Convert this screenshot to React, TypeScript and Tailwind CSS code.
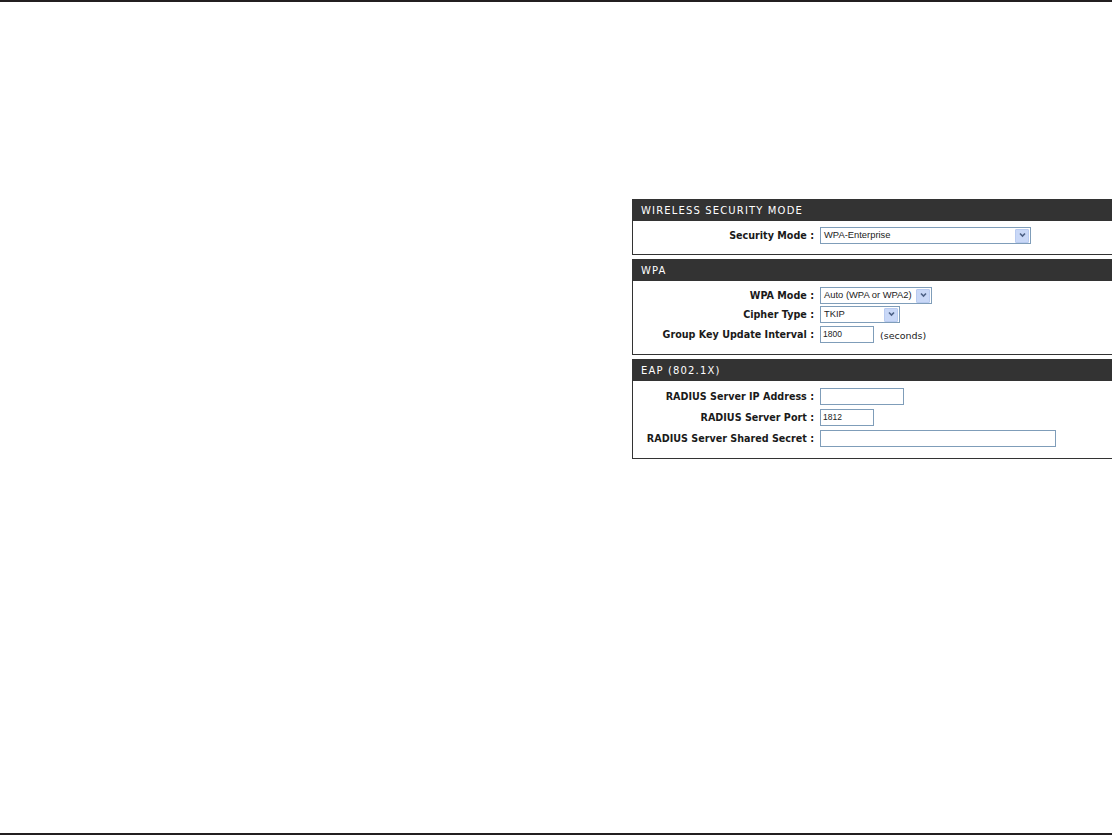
import { ReactNode } from 'react';

const labelFont = 'font-["DejaVu_Sans",sans-serif]';

function Panel({ title, height, body, children }: { title: string; height: string; body: string; children: ReactNode }) {
  return (
    <section className={`${height} border-l border-b border-[#333333] flex flex-col`}>
      <h2 className={`h-[22px] bg-[#333333] pl-[8px] flex items-center text-[10px] tracking-[1.15px] text-white font-normal ${labelFont}`}>
        {title}
      </h2>
      <div className={`flex flex-col ${body}`}>{children}</div>
    </section>
  );
}

function Row({ label, children }: { label: string; children: ReactNode }) {
  return (
    <div className="flex items-center h-[17px]">
      <label className={`w-[182px] pr-[1px] pt-[1px] leading-[14px] text-right text-[9.6px] font-bold text-[#1a1a1a] whitespace-nowrap ${labelFont}`}>
        {label}&nbsp;:
      </label>
      <div className="ml-[5px] flex items-center">{children}</div>
    </div>
  );
}

function Select({ value, width }: { value: string; width: string }) {
  return (
    <div className={`${width} h-[17px] border border-[#7f9db9] bg-white flex items-center pl-[3px] pr-[1px] justify-between`}>
      <span className='text-[9.4px] text-[#222222] font-["Liberation_Sans",sans-serif]'>{value}</span>
      <span className="w-[14px] h-[14px] bg-[#c9d8f7] border border-[#b9cbf0] rounded-[1px] flex items-center justify-center">
        <svg width="9" height="7" viewBox="0 0 9 7" fill="none">
          <path d="M2 1.5 4.5 4 7 1.5" stroke="#4d6185" strokeWidth="1.6" />
        </svg>
      </span>
    </div>
  );
}

function Input({ value, width }: { value?: string; width: string }) {
  return (
    <div className={`${width} h-[17px] border border-[#7f9db9] bg-white pl-[2px] flex items-center text-[8.5px] text-[#222222] font-["Liberation_Sans",sans-serif]`}>
      {value}
    </div>
  );
}

export default function App() {
  return (
    <div className="w-[1112px] h-[835px] bg-white flex flex-col overflow-hidden">
      <div className="h-[2px] bg-[#231f20]" />

      <main className="flex-1 pt-[197px] pl-[632px] flex flex-col gap-[4px]">
        <Panel title="WIRELESS SECURITY MODE" height="h-[56px]" body="pt-[6px]">
          <Row label="Security Mode">
            <Select value="WPA-Enterprise" width="w-[211px]" />
          </Row>
        </Panel>

        <Panel title="WPA" height="h-[96px]" body="pt-[6px] gap-[2px]">
          <Row label="WPA Mode">
            <Select value="Auto (WPA or WPA2)" width="w-[112px]" />
          </Row>
          <Row label="Cipher Type">
            <Select value="TKIP" width="w-[80px]" />
          </Row>
          <div className="mt-[1px]">
            <Row label="Group Key Update Interval">
              <Input value="1800" width="w-[54px]" />
              <span className={`ml-[6px] pt-[2px] leading-[14px] text-[9.5px] text-[#222222] ${labelFont}`}>(seconds)</span>
            </Row>
          </div>
        </Panel>

        <Panel title="EAP (802.1X)" height="h-[100px]" body="pt-[7px] gap-[4px]">
          <Row label="RADIUS Server IP Address">
            <Input width="w-[84px]" />
          </Row>
          <Row label="RADIUS Server Port">
            <Input value="1812" width="w-[54px]" />
          </Row>
          <Row label="RADIUS Server Shared Secret">
            <Input width="w-[236px]" />
          </Row>
        </Panel>
      </main>

      <div className="h-[2px] bg-[#231f20]" />
    </div>
  );
}
